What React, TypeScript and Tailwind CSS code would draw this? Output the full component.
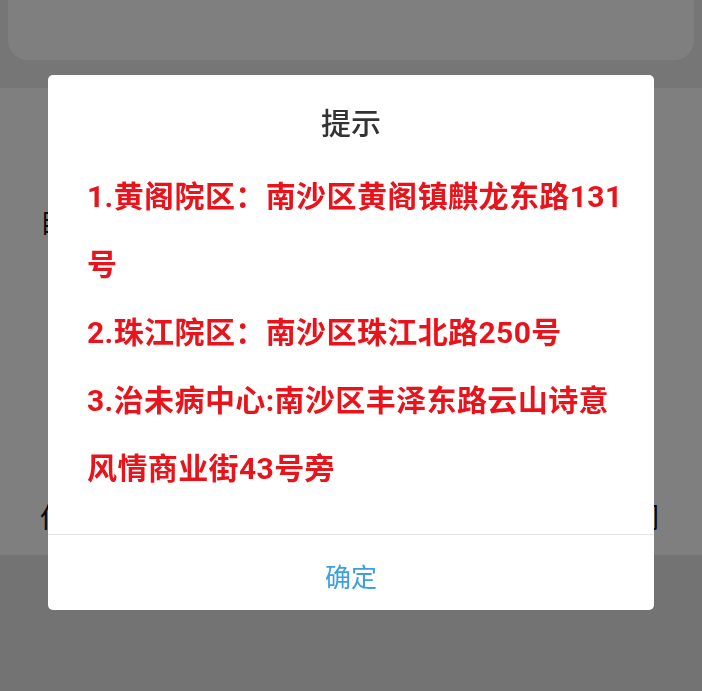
import { FC } from 'react';

const font = { fontFamily: 'Roboto, "Noto Sans CJK SC", sans-serif' };

const addresses = [
  '1.黄阁院区：南沙区黄阁镇麒龙东路131号',
  '2.珠江院区：南沙区珠江北路250号',
  '3.治未病中心:南沙区丰泽东路云山诗意风情商业街43号旁',
];

const NoticeDialog: FC = () => {
  return (
    <div className="fixed inset-0 z-10 bg-black/50">
      <div className="mx-auto mt-[75px] w-[606px] overflow-hidden rounded-[5px] bg-white">
        <h2 className="pt-[34px] text-center text-[30px] font-medium leading-[30px] text-[#333]">
          提示
        </h2>
        <div className="mt-6 pl-[39px] pr-[30px] pb-[31px]">
          {addresses.map((item) => (
            <p
              key={item}
              className="text-[30px] font-bold leading-[68px] tracking-[0.4px] text-[#e8131b]"
            >
              {item}
            </p>
          ))}
        </div>
        <div className="h-px bg-[#e6e6e6]" />
        <button className="flex h-[75px] w-full items-center justify-center pt-[11px] text-[26px] leading-[32px] text-[#3d9ee0]">
          确定
        </button>
      </div>
    </div>
  );
};

export default function App() {
  return (
    <div className="relative h-[691px] w-[702px] overflow-hidden bg-white" style={font}>
      <div className="h-[88px] bg-[#ececec] px-2">
        <div className="h-[60px] rounded-b-[20px] bg-white" />
      </div>
      <div className="flex h-[467px] flex-col bg-white px-10">
        <p className="mt-[118px] text-[26px] leading-[36px] text-[#111]">目</p>
        <div className="mt-auto mb-[18px] flex justify-between text-[28px] leading-[36px] text-[#111]">
          <span>但</span>
          <span className="mr-[3px]">们</span>
        </div>
      </div>
      <div className="h-[136px] bg-[#e7e7e7]" />
      <NoticeDialog />
    </div>
  );
}
